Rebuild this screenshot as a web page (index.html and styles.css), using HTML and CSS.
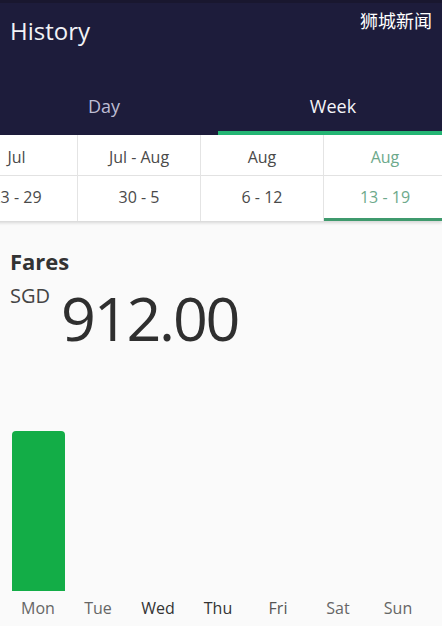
FILE: index.html
```html
<!DOCTYPE html>
<html>
<head>
<meta charset="utf-8">
<link rel="stylesheet" href="styles.css">
</head>
<body>
<div class="screen">
  <header class="header">
    <div class="titlebar">
      <h1 class="title">History</h1>
      <span class="watermark">狮城新闻</span>
    </div>
    <nav class="tabs">
      <div class="tab">Day</div>
      <div class="tab tab-active">Week</div>
    </nav>
  </header>

  <section class="weeks">
    <div class="week">
      <div class="week-month">Jul</div>
      <div class="week-range">23 - 29</div>
    </div>
    <div class="week">
      <div class="week-month">Jul - Aug</div>
      <div class="week-range">30 - 5</div>
    </div>
    <div class="week">
      <div class="week-month">Aug</div>
      <div class="week-range">6 - 12</div>
    </div>
    <div class="week week-active">
      <div class="week-month">Aug</div>
      <div class="week-range">13 - 19</div>
    </div>
  </section>

  <main class="content">
    <h2 class="fares-title">Fares</h2>
    <div class="amount">
      <span class="currency">SGD</span>
      <span class="value">912.00</span>
    </div>

    <div class="chart">
      <div class="day">
        <div class="bar-area"><div class="bar" style="height:160px"></div></div>
        <div class="day-label faded">Mon</div>
      </div>
      <div class="day">
        <div class="bar-area"></div>
        <div class="day-label faded">Tue</div>
      </div>
      <div class="day">
        <div class="bar-area"></div>
        <div class="day-label">Wed</div>
      </div>
      <div class="day">
        <div class="bar-area"></div>
        <div class="day-label">Thu</div>
      </div>
      <div class="day">
        <div class="bar-area"></div>
        <div class="day-label mid">Fri</div>
      </div>
      <div class="day">
        <div class="bar-area"></div>
        <div class="day-label faded">Sat</div>
      </div>
      <div class="day">
        <div class="bar-area"></div>
        <div class="day-label faded">Sun</div>
      </div>
    </div>
  </main>
</div>
</body>
</html>
```

FILE: styles.css
```css
* {
  box-sizing: border-box;
}

html, body {
  margin: 0;
  padding: 0;
}

body {
  background: #fafafa;
  font-family: "Open Sans", "Noto Sans", "Noto Sans CJK SC", sans-serif;
  color: #333;
}

.screen {
  width: 442px;
  height: 626px;
  overflow: hidden;
  background: #fafafa;
}

/* Header */
.header {
  background: #1d1c3b;
  border-top: 3px solid #19172f;
}

.titlebar {
  height: 81px;
  display: flex;
  justify-content: space-between;
  align-items: flex-start;
  padding: 0 10px;
}

.title {
  margin: 0;
  font-size: 24px;
  font-weight: 400;
  color: #f2f2f6;
  line-height: 31px;
  padding-top: 12px;
}

.watermark {
  font-family: "Noto Sans CJK SC", sans-serif;
  font-size: 18px;
  color: #ffffff;
  line-height: 24px;
  padding-top: 5px;
}

.tabs {
  display: flex;
}

.tab {
  flex: 1;
  height: 51px;
  line-height: 44px;
  text-align: center;
  font-size: 18px;
  color: #bdbdd3;
  border-bottom: 4px solid transparent;
}

.tab:first-child {
  flex: 0 0 218px;
  padding-right: 10px;
}

.tab-active {
  color: #f4f4f8;
  border-bottom-color: #24b574;
  padding-left: 6px;
}

/* Week selector */
.weeks {
  display: flex;
  margin-left: -44px;
  background: #ffffff;
  box-shadow: 0 2px 3px rgba(0, 0, 0, 0.14);
  position: relative;
}

.week {
  flex: 0 0 123px;
  border-right: 1px solid #e4e4e4;
  text-align: center;
  color: #4a4a4a;
  font-size: 16px;
}

.week:first-child {
  flex-basis: 122px;
}

.week-month {
  height: 41px;
  line-height: 44px;
  border-bottom: 1px solid #e2e2e2;
}

.week-range {
  height: 45px;
  line-height: 42px;
  border-bottom: 3px solid transparent;
}

.week-active {
  color: #6da98b;
}

.week-active .week-range {
  border-bottom-color: #3f9a6d;
}

/* Content */
.content {
  padding: 25px 10px 0 10px;
}

.fares-title {
  margin: 0;
  font-size: 22px;
  font-weight: 700;
  line-height: 30px;
  color: #333;
}

.amount {
  display: flex;
  align-items: flex-start;
  gap: 11px;
}

.currency {
  font-size: 20px;
  line-height: 26px;
  margin-top: 7px;
  color: #444;
}

.value {
  font-size: 61px;
  line-height: 84px;
  color: #2f2f2f;
  letter-spacing: -2.2px;
}

/* Chart */
.chart {
  display: flex;
  margin-top: 71px;
  margin-left: -2px;
}

.day {
  flex: 0 0 60px;
  display: flex;
  flex-direction: column;
  align-items: center;
}

.bar-area {
  height: 160px;
  width: 100%;
  display: flex;
  align-items: flex-end;
  justify-content: center;
}

.bar {
  width: 53px;
  background: #13ad47;
  border-radius: 4px 4px 0 0;
}

.day-label {
  margin-top: 6px;
  font-size: 16px;
  line-height: 22px;
  color: #333;
}

.day-label.mid {
  color: #555;
}

.day-label.faded {
  color: #666;
}
```
